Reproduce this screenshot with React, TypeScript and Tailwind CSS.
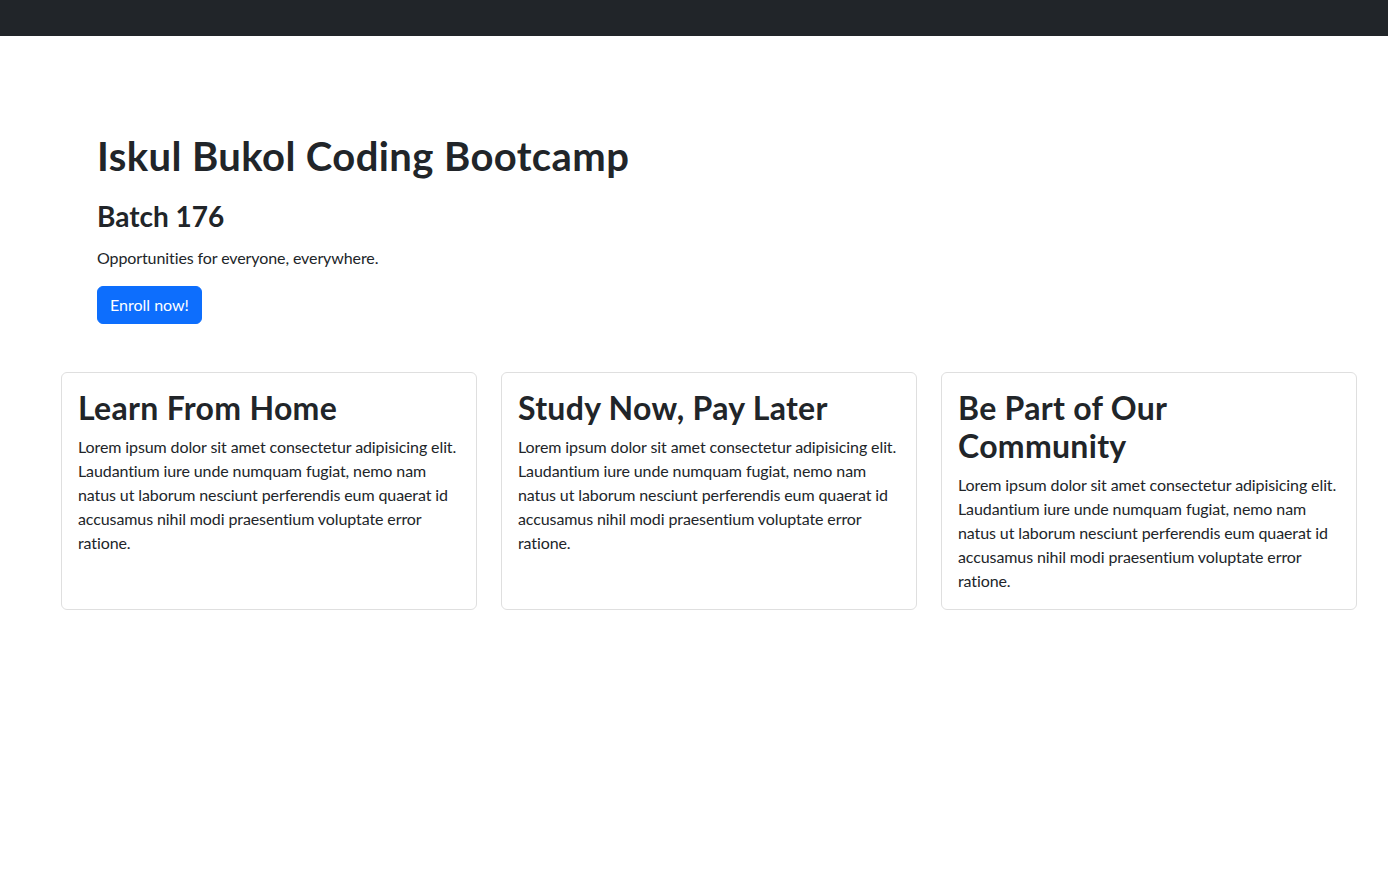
const cards = [
  {
    title: "Learn From Home",
    body: "Lorem ipsum dolor sit amet consectetur adipisicing elit. Laudantium iure unde numquam fugiat, nemo nam natus ut laborum nesciunt perferendis eum quaerat id accusamus nihil modi praesentium voluptate error ratione.",
  },
  {
    title: "Study Now, Pay Later",
    body: "Lorem ipsum dolor sit amet consectetur adipisicing elit. Laudantium iure unde numquam fugiat, nemo nam natus ut laborum nesciunt perferendis eum quaerat id accusamus nihil modi praesentium voluptate error ratione.",
  },
  {
    title: "Be Part of Our Community",
    body: "Lorem ipsum dolor sit amet consectetur adipisicing elit. Laudantium iure unde numquam fugiat, nemo nam natus ut laborum nesciunt perferendis eum quaerat id accusamus nihil modi praesentium voluptate error ratione.",
  },
];

export default function App() {
  return (
    <div className="min-h-screen bg-white text-[#212529] font-['Lato','Noto_Sans',sans-serif]">
      <nav className="h-9 bg-[#212529]" />
      <main className="w-[1320px] ml-[49px]">
        <section className="px-12 pt-24 pb-12">
          <h1 className="text-[40px] leading-[1.2] font-bold tracking-[0.4px] mb-5">
            Iskul Bukol Coding Bootcamp
          </h1>
          <h3 className="text-[28px] leading-[1.2] font-bold mb-3">
            Batch 176
          </h3>
          <p className="text-base leading-6 tracking-[-0.1px] mb-4">
            Opportunities for everyone, everywhere.
          </p>
          <button className="px-3 py-1.5 text-base leading-6 text-white bg-[#0d6efd] border border-[#0d6efd] rounded-md">
            Enroll now!
          </button>
        </section>
        <div className="grid grid-cols-3 gap-6 px-3">
          {cards.map((card) => (
            <div
              key={card.title}
              className="border border-[#dfdfdf] rounded-md bg-white p-4"
            >
              <h2 className="text-[32px] leading-[1.2] font-bold tracking-[0.3px] mb-2 max-w-[370px]">
                {card.title}
              </h2>
              <p className="text-base leading-6 tracking-[-0.1px]">
                {card.body}
              </p>
            </div>
          ))}
        </div>
      </main>
    </div>
  );
}
